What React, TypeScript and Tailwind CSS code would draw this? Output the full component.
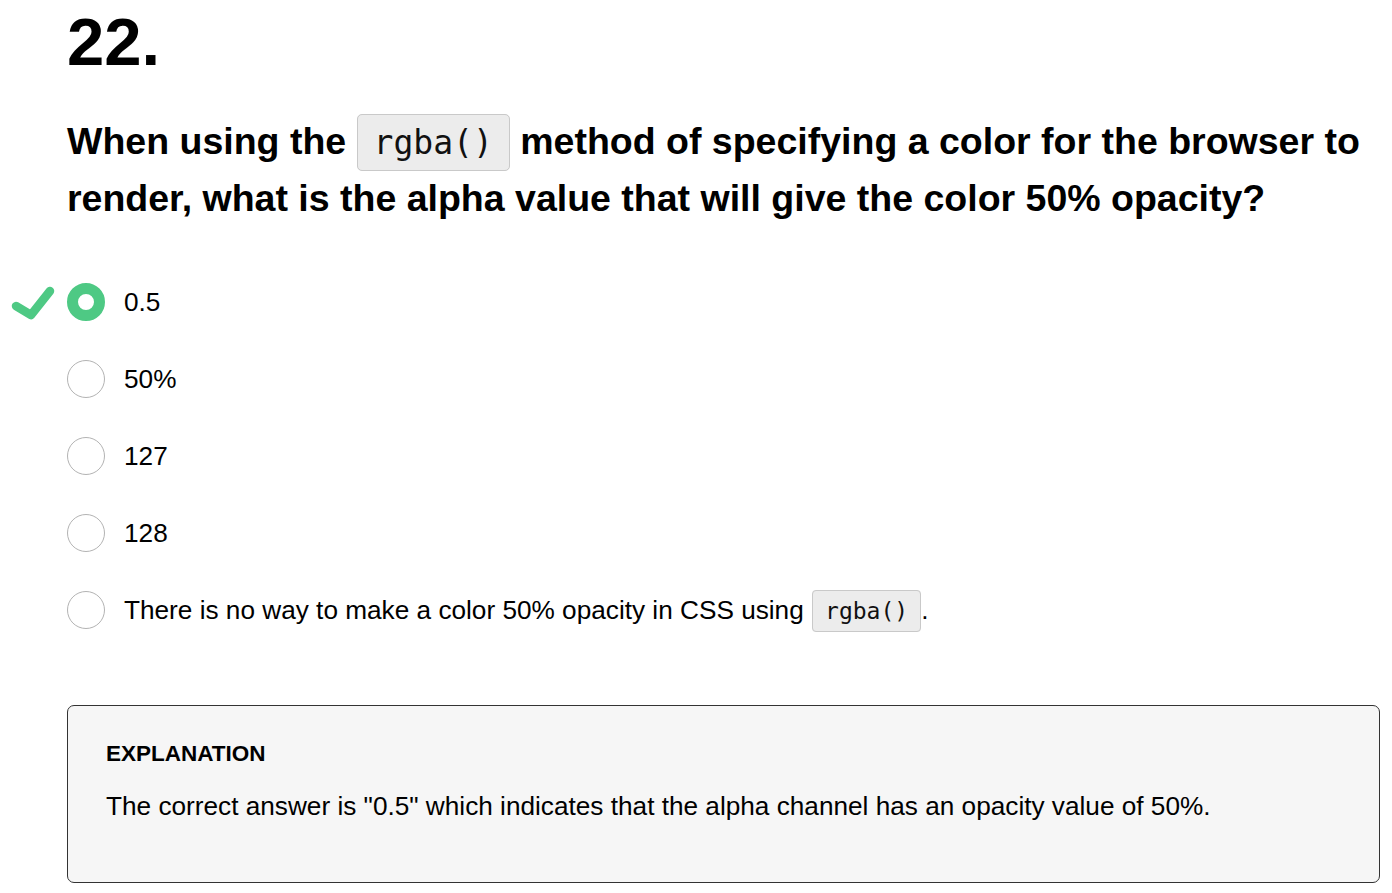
import React from "react";

const options = [
  { label: "0.5", correct: true },
  { label: "50%" },
  { label: "127" },
  { label: "128" },
];

function Code({ big }: { big?: boolean }) {
  if (big) {
    return (
      <span className="rounded-[5px] border border-[#c9c9c9] bg-[#ececec] px-[16px] py-[8px] font-['DejaVu_Sans_Mono',monospace] text-[33px] font-normal leading-none text-[#111]">
        rgba()
      </span>
    );
  }
  return (
    <span className="ml-[1px] rounded-[4px] border border-[#c9c9c9] bg-[#ececec] px-[12px] py-[7px] font-['DejaVu_Sans_Mono',monospace] text-[23px] leading-none text-[#111]">
      rgba()
    </span>
  );
}

function Radio({ checked }: { checked?: boolean }) {
  if (checked) {
    return <span className="block h-[38px] w-[38px] shrink-0 rounded-full border-[11px] border-[#4ec984] bg-white" />;
  }
  return <span className="block h-[38px] w-[38px] shrink-0 rounded-full border-[1.5px] border-[#b3b3b3] bg-white" />;
}

export default function App() {
  return (
    <div className="min-h-[893px] bg-white pl-[67px] font-['Liberation_Sans',Arial,sans-serif] text-black">
      <h1 className="pt-[8px] text-[67px] font-bold leading-none">22.</h1>
      <p className="mt-[38px] w-[1312px] text-[37.5px] font-bold leading-[57px]">
        When using the <Code big /> method of specifying a color for the browser to render, what is the alpha value
        that will give the color 50% opacity?
      </p>
      <div className="mt-[56px] flex flex-col gap-[39px]">
        {options.map((o) => (
          <div key={o.label} className="relative flex h-[38px] items-center gap-[19px]">
            {o.correct && (
              <svg
                className="absolute left-[-60px] top-[-7px]"
                width="50"
                height="50"
                viewBox="0 0 50 50"
                fill="none"
              >
                <path
                  d="M9 30 L24 39 L43 15"
                  stroke="#4ec984"
                  strokeWidth="8.5"
                  strokeLinecap="round"
                  strokeLinejoin="round"
                />
              </svg>
            )}
            <Radio checked={o.correct} />
            <span className="text-[26.2px] leading-[38px]">{o.label}</span>
          </div>
        ))}
        <div className="flex h-[38px] items-center gap-[19px]">
          <Radio />
          <span className="whitespace-nowrap text-[26.2px] leading-[38px]">
            There is no way to make a color 50% opacity in CSS using <Code />.
          </span>
        </div>
      </div>
      <div className="mt-[76px] w-[1313px] rounded-[7px] border border-[#333] bg-[#f6f6f6] pb-[61px] pl-[38px] pt-[35px]">
        <div className="text-[22.5px] font-bold leading-[26px]">EXPLANATION</div>
        <p className="mt-[24px] text-[26.2px] leading-[30px]">
          The correct answer is "0.5" which indicates that the alpha channel has an opacity value of 50%.
        </p>
      </div>
    </div>
  );
}
